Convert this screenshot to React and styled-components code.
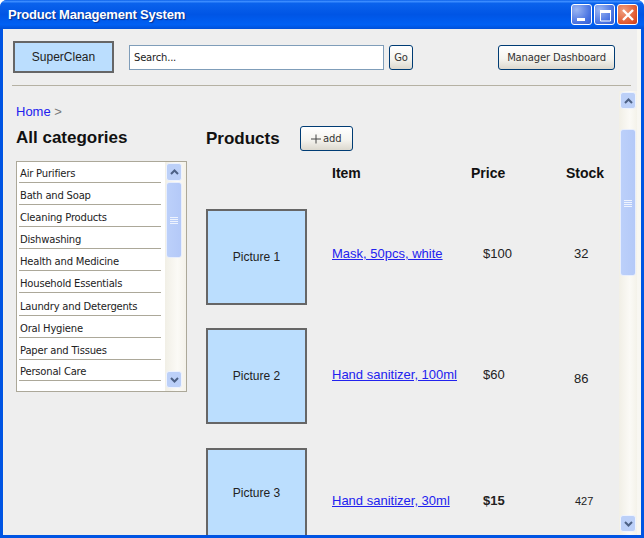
import React from 'react';
import styled, { createGlobalStyle } from 'styled-components';

const CATEGORIES = [
  { name: 'Air Purifiers', height: 21, top: 2 },
  { name: 'Bath and Soap', height: 22, top: 3 },
  { name: 'Cleaning Products', height: 22, top: 3 },
  { name: 'Dishwashing', height: 22, top: 3 },
  { name: 'Health and Medicine', height: 22, top: 3 },
  { name: 'Household Essentials', height: 22, top: 3 },
  { name: 'Laundry and Detergents', height: 23, top: 4 },
  { name: 'Oral Hygiene', height: 22, top: 3 },
  { name: 'Paper and Tissues', height: 22, top: 3 },
  { name: 'Personal Care', height: 21, top: 2 },
];

const PRODUCTS = [
  { picture: 'Picture 1', name: 'Mask, 50pcs, white', price: '$100', stock: '32', nameTop: 37, stockTop: 37, rowHeight: 119 },
  { picture: 'Picture 2', name: 'Hand sanitizer, 100ml', price: '$60', stock: '86', nameTop: 39, stockTop: 43, rowHeight: 120 },
  { picture: 'Picture 3', name: 'Hand sanitizer, 30ml', price: '$15', stock: '427', nameTop: 45, stockTop: 45, rowHeight: 96, pictureTop: 36, strong: true },
];

const GlobalStyle = createGlobalStyle`
  html, body {
    margin: 0;
    padding: 0;
    background: #fff;
    overflow: hidden;
  }
`;

const Window = styled.div`
  width: 644px;
  height: 538px;
  display: flex;
  flex-direction: column;
  background: #0054e3;
  border-radius: 7px 7px 0 0;
  overflow: hidden;
  font-family: 'Liberation Sans', Arial, sans-serif;
  color: #222;
`;

const TitleBar = styled.div`
  height: 29px;
  flex: none;
  display: flex;
  align-items: center;
  justify-content: space-between;
  padding: 0 6px 0 8px;
  background: linear-gradient(180deg, #0a5fe8 0%, #3b8cff 5%, #0a62ec 12%, #0055e5 50%, #0060f4 85%, #0050d8 100%);
`;

const Title = styled.span`
  font-size: 13px;
  font-weight: bold;
  letter-spacing: -0.2px;
  color: #fff;
  text-shadow: 1px 1px 1px #0a2f8c;
`;

const Controls = styled.div`
  display: flex;
  gap: 2px;
`;

const ControlButton = styled.div`
  width: 21px;
  height: 21px;
  box-sizing: border-box;
  border: 1px solid #fff;
  border-radius: 3px;
  background: ${p => p.$close
    ? 'radial-gradient(circle at 30% 30%, #f0a080, #e0562c 70%, #c83c18)'
    : 'radial-gradient(circle at 25% 25%, #9cb6f2, #4a74e2 65%, #2f5cd4)'};
  display: flex;
  align-items: center;
  justify-content: center;
`;

const Frame = styled.div`
  flex: 1;
  min-height: 0;
  display: flex;
  flex-direction: column;
  margin: 0 3px 3px;
  background: #eeeeee;
  border-left: 1px solid #f3f2ea;
  border-right: 4px solid #f8f7f2;
`;

const Toolbar = styled.div`
  height: 57px;
  flex: none;
  box-sizing: border-box;
  margin: 0 6px 0 8px;
  padding: 12px 16px 0 1px;
  border-bottom: 1px solid #b5b1a3;
  display: flex;
  align-items: flex-start;
`;

const Logo = styled.div`
  width: 101px;
  height: 32px;
  box-sizing: border-box;
  border: 2px solid #666;
  background: #bbdefe;
  font-size: 12px;
  display: flex;
  align-items: center;
  justify-content: center;
`;

const SearchInput = styled.div`
  width: 255px;
  height: 25px;
  box-sizing: border-box;
  margin: 4px 0 0 15px;
  padding-left: 4px;
  border: 1px solid #7f9db9;
  background: #fff;
  font-family: 'DejaVu Sans', Tahoma, sans-serif;
  font-size: 10px;
  letter-spacing: -0.2px;
  line-height: 23px;
  color: #222;
`;

const XpButton = styled.div`
  height: 25px;
  width: ${p => p.$width}px;
  box-sizing: border-box;
  flex: none;
  margin: ${p => p.$margin || 0};
  border: 1px solid #003c74;
  border-radius: 3px;
  background: linear-gradient(180deg, #ffffff 0%, #f5f4ef 55%, #dcd8ce 100%);
  font-family: 'DejaVu Sans', Tahoma, sans-serif;
  font-size: 10px;
  letter-spacing: -0.15px;
  color: #333;
  display: flex;
  align-items: center;
  justify-content: center;
`;

const Body = styled.div`
  flex: 1;
  min-height: 0;
  display: flex;
  overflow: hidden;
`;

const Page = styled.div`
  flex: 1;
  min-width: 0;
  overflow: hidden;
  padding: 17px 0 0 12px;
`;

const Crumbs = styled.div`
  font-size: 13px;
  line-height: 18px;
  color: #777;
`;

const Link = styled.a`
  color: #2222ee;
  text-decoration: ${p => (p.$plain ? 'none' : 'underline')};
`;

const Columns = styled.div`
  display: flex;
  margin-top: 6px;
`;

const Sidebar = styled.aside`
  width: 190px;
  flex: none;

  h2 {
    margin-top: 1px;
  }
`;

const Heading = styled.h2`
  margin: 0;
  font-size: 17px;
  line-height: 20px;
  font-weight: bold;
  color: #111;
`;

const CategoryBox = styled.div`
  width: 171px;
  height: 231px;
  box-sizing: border-box;
  margin-top: 13px;
  border: 1px solid #aca899;
  background: #fff;
  display: flex;
`;

const CategoryList = styled.ul`
  flex: 1;
  margin: 0;
  padding: 0 4px 0 2px;
  list-style: none;
`;

const CategoryRow = styled.li`
  height: ${p => p.$height}px;
  box-sizing: border-box;
  border-bottom: 1px solid #aca899;
  padding: ${p => p.$top}px 0 0 1px;
  font-family: 'DejaVu Sans', Tahoma, sans-serif;
  font-size: 10px;
  letter-spacing: -0.2px;
  line-height: 20px;
  color: #222;
  white-space: nowrap;
`;

const Track = styled.div`
  width: ${p => p.$width}px;
  flex: none;
  box-sizing: border-box;
  margin-top: ${p => p.$top || 0}px;
  padding: ${p => p.$padding};
  background: linear-gradient(90deg, #f1efe6, #fbfaf6 60%, #f4f2ea);
  display: flex;
  flex-direction: column;
`;

const ScrollArrow = styled.div`
  width: 16px;
  height: ${p => p.$height || 17}px;
  flex: none;
  box-sizing: border-box;
  border: 1px solid #eef3fe;
  border-radius: 3px;
  background: #bcd0f8;
  display: flex;
  align-items: center;
  justify-content: center;
`;

const Thumb = styled.div`
  width: 16px;
  height: ${p => p.$height}px;
  margin-top: ${p => p.$top}px;
  flex: none;
  box-sizing: border-box;
  border: 1px solid #e8eefc;
  border-radius: 3px;
  background: linear-gradient(90deg, #bcd0fa, #b4c9f8);
  display: flex;
  align-items: center;
  justify-content: center;
`;

const Spacer = styled.div`
  flex: 1;
`;

const Products = styled.section`
  flex: 1;
  min-width: 0;
`;

const ProductsHead = styled.div`
  display: flex;
  align-items: center;
  height: 25px;
  margin-top: -1px;
`;

const AddButtonText = styled.span`
  font-size: 10px;
  margin-left: 2px;
`;

const TableRow = styled.div`
  display: grid;
  grid-template-columns: 126px 151px 83px 1fr;
  height: ${p => p.$height}px;
`;

const HeaderCell = styled.div`
  margin: 14px 0 0 ${p => p.$left || 0}px;
  font-size: 14px;
  font-weight: bold;
  line-height: 16px;
  color: #111;
`;

const Picture = styled.div`
  width: 101px;
  height: 96px;
  box-sizing: border-box;
  border: 2px solid #666;
  background: #bbdefe;
  font-size: 12px;
  display: flex;
  align-items: ${p => (p.$top ? 'flex-start' : 'center')};
  justify-content: center;
  padding: ${p => (p.$top ? `${p.$top}px 0 0` : '0')};
`;

const Cell = styled.div`
  margin-top: ${p => p.$top}px;
  margin-left: ${p => p.$left || 0}px;
  font-size: ${p => p.$size || 13}px;
  font-weight: ${p => (p.$strong ? 'bold' : 'normal')};
  line-height: 16px;
  white-space: nowrap;
`;

const ArrowUp = () => (
  <svg width="9" height="6" viewBox="0 0 9 6">
    <path d="M1 5 L4.5 1.5 L8 5" fill="none" stroke="#4d6185" strokeWidth="2" />
  </svg>
);

const ArrowDown = () => (
  <svg width="9" height="6" viewBox="0 0 9 6">
    <path d="M1 1 L4.5 4.5 L8 1" fill="none" stroke="#4d6185" strokeWidth="2" />
  </svg>
);

const Grip = () => (
  <svg width="8" height="8" viewBox="0 0 8 8">
    <path d="M0 1.5H8M0 3.5H8M0 5.5H8M0 7.5H8" stroke="#eef3fe" strokeWidth="1" />
  </svg>
);

const App = () => (
  <>
    <GlobalStyle />
    <Window>
      <TitleBar>
        <Title>Product Management System</Title>
        <Controls>
          <ControlButton>
            <svg width="14" height="14" viewBox="0 0 14 14">
              <rect x="2" y="10" width="8" height="3" fill="#fff" />
            </svg>
          </ControlButton>
          <ControlButton>
            <svg width="14" height="14" viewBox="0 0 14 14">
              <path d="M2 2.5H12.5V13H2.5V2.5" fill="none" stroke="#fff" />
              <rect x="2" y="2" width="11" height="3" fill="#fff" />
            </svg>
          </ControlButton>
          <ControlButton $close>
            <svg width="14" height="14" viewBox="0 0 14 14">
              <path d="M2 2L12 12M12 2L2 12" stroke="#fff" strokeWidth="2.4" />
            </svg>
          </ControlButton>
        </Controls>
      </TitleBar>
      <Frame>
        <Toolbar>
          <Logo>SuperClean</Logo>
          <SearchInput>Search...</SearchInput>
          <XpButton $width={24} $margin="4px 0 0 5px">Go</XpButton>
          <Spacer />
          <XpButton $width={117} $margin="4px 0 0">Manager Dashboard</XpButton>
        </Toolbar>
        <Body>
          <Page>
            <Crumbs>
              <Link $plain href="#">Home</Link> &gt;
            </Crumbs>
            <Columns>
              <Sidebar>
                <Heading>All categories</Heading>
                <CategoryBox>
                  <CategoryList>
                    {CATEGORIES.map(c => (
                      <CategoryRow key={c.name} $height={c.height} $top={c.top}>{c.name}</CategoryRow>
                    ))}
                  </CategoryList>
                  <Track $width={21} $padding="1px 3px 3px 1px">
                    <ScrollArrow $height={18}><ArrowUp /></ScrollArrow>
                    <Thumb $height={76} $top={1}><Grip /></Thumb>
                    <Spacer />
                    <ScrollArrow><ArrowDown /></ScrollArrow>
                  </Track>
                </CategoryBox>
              </Sidebar>
              <Products>
                <ProductsHead>
                  <Heading>Products</Heading>
                  <XpButton $width={53} $margin="0 0 0 20px">
                    <svg width="10" height="10" viewBox="0 0 10 10">
                      <path d="M0 5H10M5 0.5V9.5" stroke="#444" strokeWidth="1" />
                    </svg>
                    <AddButtonText>add</AddButtonText>
                  </XpButton>
                </ProductsHead>
                <TableRow $height={58}>
                  <span />
                  <HeaderCell>Item</HeaderCell>
                  <HeaderCell $left={-12}>Price</HeaderCell>
                  <HeaderCell>Stock</HeaderCell>
                </TableRow>
                {PRODUCTS.map(p => (
                  <TableRow key={p.picture} $height={p.rowHeight}>
                    <Picture $top={p.pictureTop}>{p.picture}</Picture>
                    <Cell $top={p.nameTop}><Link href="#">{p.name}</Link></Cell>
                    <Cell $top={p.nameTop} $strong={p.strong}>{p.price}</Cell>
                    <Cell $top={p.stockTop} $left={p.strong ? 9 : 8} $size={p.strong ? 11 : 13}>{p.stock}</Cell>
                  </TableRow>
                ))}
              </Products>
            </Columns>
          </Page>
          <Track $width={18} $top={5} $padding="1px 1px 3px">
            <ScrollArrow><ArrowUp /></ScrollArrow>
            <Thumb $height={147} $top={20}><Grip /></Thumb>
            <Spacer />
            <ScrollArrow><ArrowDown /></ScrollArrow>
          </Track>
        </Body>
      </Frame>
    </Window>
  </>
);

export default App;
